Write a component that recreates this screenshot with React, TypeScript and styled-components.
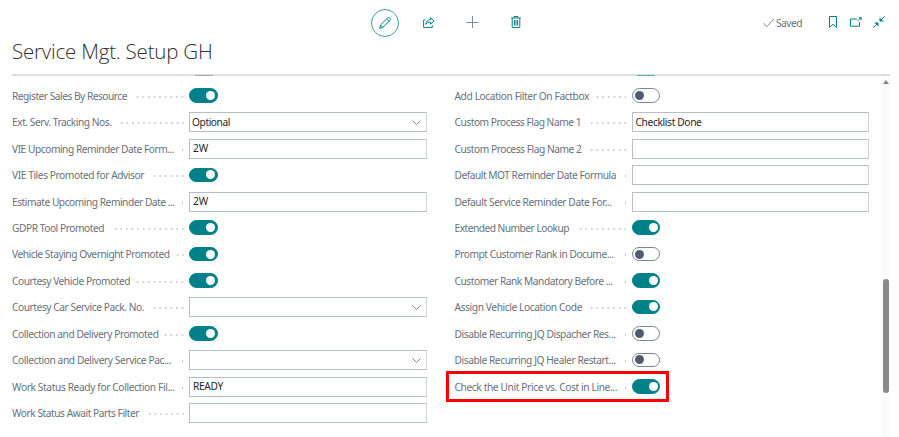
import React, { useLayoutEffect, useRef, useState } from "react";
import styled, { createGlobalStyle } from "styled-components";

const TEAL = "#008089";

const GlobalStyle = createGlobalStyle`
  * { box-sizing: border-box; }
  html, body { margin: 0; background: #fff; overflow: hidden; }
  body { font-family: "Noto Sans", "Open Sans", sans-serif; font-size: 10.2px; color: #68717d; }
`;

const Page = styled.div`
  width: 899px;
  height: 437px;
  overflow: hidden;
  display: flex;
  flex-direction: column;
`;

const Toolbar = styled.header`
  height: 37px;
  padding-top: 8px;
  padding-left: 371px;
  display: flex;
  align-items: flex-start;
`;

const IconButton = styled.button<{ $width: number; $color?: string }>`
  width: ${(p) => p.$width}px;
  height: 28px;
  padding: 0;
  border: 0;
  background: none;
  color: ${(p) => p.$color ?? TEAL};
  display: flex;
  align-items: center;
  justify-content: center;
  flex: none;
  svg { display: block; overflow: visible; }
`;

const EditButton = styled(IconButton)`
  height: 28px;
  margin-top: 0.5px;
  border: 1px solid #3b9ca3;
  border-radius: 50%;
`;

const SaveState = styled.div`
  display: flex;
  align-items: center;
  height: 30px;
  width: 52px;
  margin-left: 218px;
  margin-right: 6.5px;
  gap: 1px;
  svg { flex: none; }
`;

const Title = styled.h1`
  margin: 0 0 0 12px;
  height: 37px;
  line-height: 28px;
  font-family: "Open Sans", "Noto Sans", sans-serif;
  font-size: 20.5px;
  font-weight: 300;
  color: #303030;
`;

const Body = styled.main`
  margin-left: 12px;
  width: 878px;
  flex: 1;
  min-height: 0;
  border-top: 2px solid #dcdde0;
  display: flex;
`;

const Columns = styled.div`
  flex: 1;
  display: grid;
  grid-template-columns: 414.5px 414.5px;
  column-gap: 28px;
`;

const Column = styled.section``;

const ScrolledOff = styled.div<{ $color: string }>`
  width: 18px;
  height: 1px;
  margin: -1px 0 6.6px 182.5px;
  position: relative;
  background: ${(p) => p.$color};
`;

const Row = styled.div`
  height: 26.45px;
  display: flex;
  align-items: center;
`;

const Caption = styled.div`
  width: 172px;
  flex: none;
  display: flex;
  align-items: center;
  justify-content: space-between;
  padding-top: 1px;
`;

const Leader = styled.span<{ $count: number }>`
  width: ${(p) => p.$count * 5.6}px;
  height: 2px;
  margin-top: 1px;
  margin-right: 0.2px;
  background: radial-gradient(circle at 4.6px 1px, #bfc3c8 0.55px, transparent 1px) right top / 5.6px 2px repeat-x;
`;

const TextRun = styled.span`
  white-space: nowrap;
  display: inline-block;
  line-height: 15px;
`;

const Field = styled.div<{ $select?: boolean }>`
  margin-left: 5px;
  flex: 1;
  height: 20px;
  border: 1px solid #b9bdc7;
  border-right-color: #cdd1d8;
  padding: 0 5px 0 ${(p) => (p.$select ? 2 : 3)}px;
  display: flex;
  align-items: center;
  justify-content: space-between;
  color: #25282d;
`;

const Switch = styled.span<{ $on: boolean }>`
  width: 28.5px;
  height: 14.5px;
  margin: -0.7px 0 0 5.3px;
  padding: 0 ${(p) => (p.$on ? 1.5 : 2)}px;
  border-radius: 8px;
  border: 1px solid ${(p) => (p.$on ? TEAL : "#7d8490")};
  background: ${(p) => (p.$on ? TEAL : "#fff")};
  display: flex;
  align-items: center;
  justify-content: ${(p) => (p.$on ? "flex-end" : "flex-start")};
  &::after {
    content: "";
    width: 9px;
    height: 9px;
    border-radius: 50%;
    background: ${(p) => (p.$on ? "#fff" : "#505c6d")};
  }
`;

const Highlight = styled.div`
  position: absolute;
  left: 446px;
  top: 371px;
  width: 223px;
  height: 31px;
  border: 3px solid #f00;
`;

const Scrollbar = styled.div`
  width: 8px;
  margin-left: auto;
  background: #fbfbfb;
  display: flex;
  flex-direction: column;
  align-items: center;
`;

const ScrollArrow = styled.i`
  margin-top: 4px;
  border: 3px solid transparent;
  border-top: 0;
  border-bottom: 4px solid #858585;
`;

const Thumb = styled.div`
  width: 5.5px;
  height: 113.5px;
  margin-top: 195px;
  border-radius: 3px;
  background: #8a8a8a;
`;

/** Text whose letter spacing is adjusted so that it occupies a given width. */
function Fit({ text, width }: { text: string; width: number }) {
  const ref = useRef<HTMLSpanElement>(null);
  const [spacing, setSpacing] = useState(0);
  useLayoutEffect(() => {
    if (ref.current) {
      const natural = ref.current.getBoundingClientRect().width;
      setSpacing((width - natural) / text.length);
    }
  }, [text, width]);
  return <TextRun ref={ref} style={{ letterSpacing: spacing }}>{text}</TextRun>;
}

type Setting = {
  label: string;
  width: number;
  dots: number;
  on?: boolean;
  value?: string;
  valueWidth?: number;
  select?: boolean;
};

const left: Setting[] = [
  { label: "Register Sales By Resource", width: 115, dots: 9, on: true },
  { label: "Ext. Serv. Tracking Nos.", width: 99.5, dots: 12, value: "Optional", valueWidth: 38, select: true },
  { label: "VIE Upcoming Reminder Date Form...", width: 162, dots: 1, value: "2W", valueWidth: 15 },
  { label: "VIE Tiles Promoted for Advisor", width: 132, dots: 6, on: true },
  { label: "Estimate Upcoming Reminder Date ...", width: 162.5, dots: 1, value: "2W", valueWidth: 15 },
  { label: "GDPR Tool Promoted", width: 92, dots: 13, on: true },
  { label: "Vehicle Staying Overnight Promoted", width: 157.5, dots: 2, on: true },
  { label: "Courtesy Vehicle Promoted", width: 118, dots: 9, on: true },
  { label: "Courtesy Car Service Pack. No.", width: 132, dots: 6, value: "", select: true },
  { label: "Collection and Delivery Promoted", width: 146.5, dots: 4, on: true },
  { label: "Collection and Delivery Service Pac...", width: 159, dots: 1, value: "", select: true },
  { label: "Work Status Ready for Collection Fil...", width: 162.5, dots: 1, value: "READY", valueWidth: 30 },
  { label: "Work Status Await Parts Filter", width: 127, dots: 7, value: "" },
];

const right: Setting[] = [
  { label: "Add Location Filter On Factbox", width: 134.5, dots: 6, on: false },
  { label: "Custom Process Flag Name 1", width: 126.5, dots: 7, value: "Checklist Done", valueWidth: 66 },
  { label: "Custom Process Flag Name 2", width: 127, dots: 7, value: "" },
  { label: "Default MOT Reminder Date Formula", width: 161.5, dots: 1, value: "" },
  { label: "Default Service Reminder Date For...", width: 157, dots: 1, value: "" },
  { label: "Extended Number Lookup", width: 114.5, dots: 9, on: true },
  { label: "Prompt Customer Rank in Docume...", width: 159, dots: 1, on: false },
  { label: "Customer Rank Mandatory Before ...", width: 158, dots: 1, on: true },
  { label: "Assign Vehicle Location Code", width: 127.5, dots: 7, on: true },
  { label: "Disable Recurring JQ Dispacher Res...", width: 161, dots: 1, on: false },
  { label: "Disable Recurring JQ Healer Restart...", width: 161, dots: 1, on: false },
  { label: "Check the Unit Price vs. Cost in Line...", width: 162.5, dots: 1, on: true },
];

function SettingRow({ item }: { item: Setting }) {
  return (
    <Row>
      <Caption>
        <Fit text={item.label} width={item.width} />
        <Leader $count={item.dots} />
      </Caption>
      {item.on !== undefined ? (
        <Switch $on={item.on} role="switch" aria-checked={item.on} />
      ) : (
        <Field $select={item.select}>
          {item.value ? <Fit text={item.value} width={item.valueWidth ?? 0} /> : <span />}
          {item.select && (
            <svg width="9" height="5" viewBox="0 0 9 5" fill="none" stroke="#777e88" strokeWidth="0.9">
              <path d="M.4.4 4.5 4.5 8.6.4" />
            </svg>
          )}
        </Field>
      )}
    </Row>
  );
}

const line = { fill: "none", stroke: "currentColor", strokeWidth: 1 };

export default function App() {
  return (
    <Page>
      <GlobalStyle />
      <Toolbar>
        <EditButton $width={28} aria-label="Edit">
          <svg width="12" height="12" viewBox="0 0 12 12" {...line}>
            <path d="M.6 11.4 1.5 8 8.7.9Q9.7 0 10.8 1.1 12 2.2 11.1 3.2L3.9 10.4ZM7.7 1.9l2.4 2.4M1.5 8l2.4 2.4" />
          </svg>
        </EditButton>
        <IconButton $width={60} aria-label="Share">
          <svg width="12" height="11" viewBox="0 0 12 11" {...line}>
            <path d="M2.3 3H.6v7.4h8.7V8.3" />
            <path d="M7.5.8 11.2 4 7.5 7.1V5.2C5.2 5 4 5.8 2.8 7.4 3.1 4.5 4.7 2.7 7.5 2.6Z" />
          </svg>
        </IconButton>
        <IconButton $width={28} $color="#7f8791" aria-label="New">
          <svg width="12" height="12" viewBox="0 0 12 12" {...line}><path d="M5.5 0v12M-.5 6.5h12" /></svg>
        </IconButton>
        <IconButton $width={58} aria-label="Delete">
          <svg width="10" height="12" viewBox="0 0 10 12" {...line}>
            <path d="M.2 2h9.6M3 1.8V.5h4v1.3M1.2 2v9.4h7.6V2" />
            <path d="M3.4 4v5.5M5 4v5.5M6.6 4v5.5" />
          </svg>
        </IconButton>
        <SaveState>
          <svg width="12" height="10" viewBox="0 0 12 10" fill="none" stroke="#6f7783"><path d="m.6 5.3 3.2 3.2L11.2.9" strokeWidth=".9" /></svg>
          <Fit text="Saved" width={26} />
        </SaveState>
        <IconButton $width={23} aria-label="Bookmark">
          <svg width="8" height="12" viewBox="0 0 8 12" {...line}><path d="M.5.5h7v10.8L4 8.3.5 11.3Z" /></svg>
        </IconButton>
        <IconButton $width={22.5} aria-label="Open in new window">
          <svg width="12" height="10" viewBox="0 0 12 10" {...line}>
            <path d="M7 2H.5v7.2h9V5.1M7.6 3.9 10.8.9" />
            <path d="M8.4.2h3.2v3.2Z" fill="currentColor" stroke="none" />
          </svg>
        </IconButton>
        <IconButton $width={23} aria-label="Collapse">
          <svg width="12" height="12" viewBox="0 0 12 12" {...line}>
            <path d="M11.7.3 7.5 4.5M.3 11.7l4.2-4.2M7 1.7V5h3.4M1.6 7H5v3.4" />
            <path d="M7 2.4V5h2.6ZM2.4 7H5v2.6Z" fill="currentColor" stroke="none" />
          </svg>
        </IconButton>
      </Toolbar>
      <Title><Fit text="Service Mgt. Setup GH" width={200.5} /></Title>
      <Body>
        <Columns>
          <Column>
            <ScrolledOff $color="#a3a8b1" />
            {left.map((item) => <SettingRow key={item.label} item={item} />)}
          </Column>
          <Column>
            <ScrolledOff $color="#65adb3" />
            {right.map((item) => <SettingRow key={item.label} item={item} />)}
          </Column>
        </Columns>
        <Scrollbar>
          <ScrollArrow />
          <Thumb />
        </Scrollbar>
      </Body>
      <Highlight />
    </Page>
  );
}
